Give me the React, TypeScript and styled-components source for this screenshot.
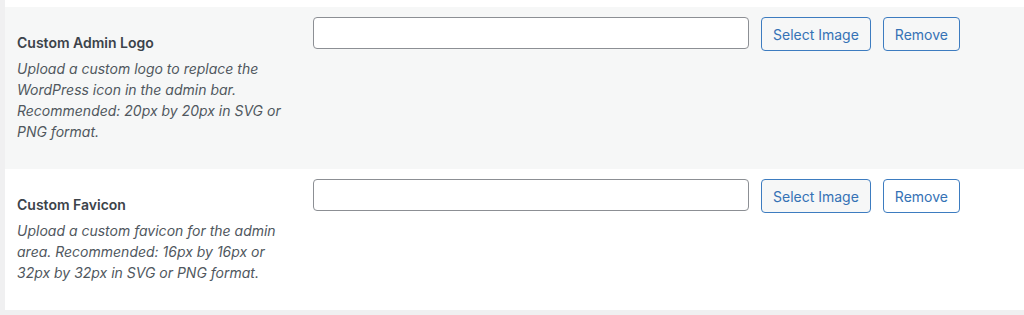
import styled, { createGlobalStyle } from 'styled-components';

const GlobalStyle = createGlobalStyle`
    body {
        margin: 0;
        background: #f0f0f1;
        font-family: Inter, "Noto Sans", "Liberation Sans", sans-serif;
    }
`;

const Panel = styled.div`
    margin-left: 5px;
    padding-top: 7px;
    background: #fff;
`;

const Row = styled.div<{ $striped?: boolean }>`
    display: flex;
    align-items: flex-start;
    background: ${props => (props.$striped ? '#f6f7f7' : '#fff')};
`;

const Label = styled.div`
    box-sizing: border-box;
    flex: 0 0 308px;
    padding: 27px 28px 27px 12px;
`;

const Title = styled.div`
    font-size: 14px;
    line-height: 18px;
    font-weight: 600;
    color: #3c434a;
`;

const Description = styled.p`
    margin: 6px 0 0;
    font-size: 14px;
    line-height: 21px;
    font-style: italic;
    color: #50575e;
`;

const Field = styled.div`
    display: flex;
    align-items: flex-start;
    gap: 12px;
    padding-top: 10px;
`;

const TextInput = styled.input`
    box-sizing: border-box;
    width: 436px;
    height: 32px;
    margin: 0;
    padding: 0 8px;
    border: 1px solid #8c8f94;
    border-radius: 4px;
    background: #fff;
    font: inherit;
`;

const Button = styled.button<{ $plain?: boolean }>`
    box-sizing: border-box;
    height: 34px;
    margin: 0;
    padding: 0 11px;
    border: 1px solid #3d7cc0;
    border-radius: 4px;
    background: ${props => (props.$plain ? 'transparent' : '#f6f7f7')};
    color: #3572b5;
    font-family: inherit;
    font-size: 14px;
    cursor: pointer;
`;

interface SettingProps {
    title: string;
    description: string;
    striped?: boolean;
}

const ImageSetting = ({ title, description, striped }: SettingProps) => (
    <Row $striped={striped}>
        <Label>
            <Title>{title}</Title>
            <Description>{description}</Description>
        </Label>
        <Field>
            <TextInput type="text" />
            <Button>Select Image</Button>
            <Button $plain>Remove</Button>
        </Field>
    </Row>
);

export default function App() {
    return (
        <>
            <GlobalStyle />
            <Panel>
                <ImageSetting
                    striped
                    title="Custom Admin Logo"
                    description="Upload a custom logo to replace the WordPress icon in the admin bar. Recommended: 20px by 20px in SVG or PNG format."
                />
                <ImageSetting
                    title="Custom Favicon"
                    description="Upload a custom favicon for the admin area. Recommended: 16px by 16px or 32px by 32px in SVG or PNG format."
                />
            </Panel>
        </>
    );
}
